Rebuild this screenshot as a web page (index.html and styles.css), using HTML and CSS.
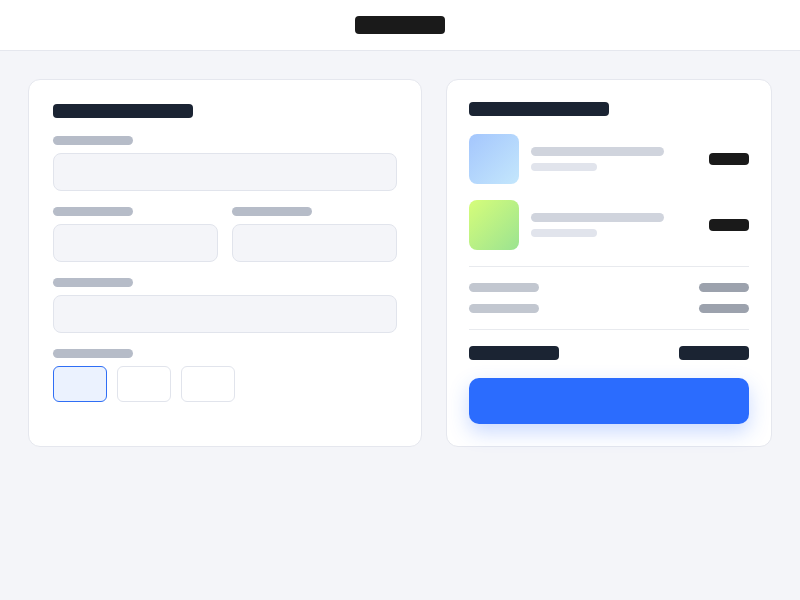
FILE: index.html
```html
<!DOCTYPE html>
<html lang="en">
<head>
  <meta charset="UTF-8" />
  <meta name="viewport" content="width=device-width, initial-scale=1.0"/>
  <title>Checkout</title>
  <link rel="stylesheet" href="styles.css">
</head>
<body>

<header class="topbar">
  <div class="logo"></div>
</header>

<main class="checkout">

  <!-- shipping form -->
  <section class="card form-card">
    <div class="card-title"></div>

    <div class="field">
      <div class="label"></div>
      <div class="input"></div>
    </div>

    <div class="field-row">
      <div class="field">
        <div class="label"></div>
        <div class="input"></div>
      </div>
      <div class="field">
        <div class="label"></div>
        <div class="input"></div>
      </div>
    </div>

    <div class="field">
      <div class="label"></div>
      <div class="input"></div>
    </div>

    <div class="field">
      <div class="label"></div>
      <div class="options">
        <div class="option selected"></div>
        <div class="option"></div>
        <div class="option"></div>
      </div>
    </div>
  </section>

  <!-- order summary -->
  <section class="card summary-card">
    <div class="card-title"></div>

    <div class="items">
      <div class="item">
        <div class="thumb blue"></div>
        <div class="item-text">
          <div class="line name"></div>
          <div class="line meta"></div>
        </div>
        <div class="price"></div>
      </div>
      <div class="item">
        <div class="thumb green"></div>
        <div class="item-text">
          <div class="line name"></div>
          <div class="line meta"></div>
        </div>
        <div class="price"></div>
      </div>
    </div>

    <div class="totals">
      <div class="sum-row">
        <div class="sum-key"></div>
        <div class="sum-val"></div>
      </div>
      <div class="sum-row">
        <div class="sum-key"></div>
        <div class="sum-val"></div>
      </div>
    </div>

    <div class="grand">
      <div class="grand-key"></div>
      <div class="grand-val"></div>
    </div>

    <button class="pay"></button>
  </section>

</main>

</body>
</html>
```

FILE: styles.css
```css
body {
  margin: 0;
  background: #f4f5f9;
  font-family: "Inter", "Liberation Sans", sans-serif;
}

.topbar {
  height: 50px;
  background: white;
  border-bottom: 1px solid #e5e7ee;
  display: flex;
  align-items: center;
  justify-content: center;
}

.logo {
  width: 90px;
  height: 18px;
  background: #1a1a1a;
  border-radius: 4px;
}

.checkout {
  display: grid;
  grid-template-columns: 394px 326px;
  gap: 24px;
  padding: 28px;
  align-items: stretch;
}

.card {
  background: white;
  border: 1px solid #e5e7ee;
  border-radius: 12px;
}

.card-title {
  width: 140px;
  height: 14px;
  background: #1b2433;
  border-radius: 4px;
}

/* form */
.form-card {
  padding: 24px;
  display: flex;
  flex-direction: column;
  gap: 16px;
}

.form-card .card-title {
  margin-bottom: 2px;
}

.field {
  display: flex;
  flex-direction: column;
  gap: 8px;
}

.field-row {
  display: grid;
  grid-template-columns: 1fr 1fr;
  gap: 14px;
}

.label {
  width: 80px;
  height: 9px;
  background: #b6bcc8;
  border-radius: 5px;
}

.input {
  height: 38px;
  box-sizing: border-box;
  background: #f4f5f9;
  border: 1px solid #e1e4ec;
  border-radius: 8px;
}

.options {
  display: flex;
  gap: 10px;
}

.option {
  width: 54px;
  height: 36px;
  box-sizing: border-box;
  background: white;
  border: 1px solid #e1e4ec;
  border-radius: 6px;
}

.option.selected {
  background: #ebf2fe;
  border-color: #2f6ef5;
}

/* summary */
.summary-card {
  padding: 22px;
  display: flex;
  flex-direction: column;
}

.items {
  margin-top: 18px;
  display: flex;
  flex-direction: column;
  gap: 16px;
  padding-bottom: 16px;
  border-bottom: 1px solid #e8eaee;
}

.item {
  display: flex;
  align-items: center;
  gap: 12px;
}

.thumb {
  width: 50px;
  height: 50px;
  border-radius: 8px;
}

.thumb.blue {
  background: linear-gradient(135deg, #a4c6fd, #c4e7fc);
}

.thumb.green {
  background: linear-gradient(135deg, #d6fd7a, #9be391);
}

.item-text {
  flex: 1;
  display: flex;
  flex-direction: column;
  gap: 7px;
}

.line {
  border-radius: 5px;
}

.line.name {
  width: 133px;
  height: 9px;
  background: #d0d4dd;
}

.line.meta {
  width: 66px;
  height: 8px;
  background: #e1e4ec;
}

.price {
  width: 40px;
  height: 12px;
  background: #1a1a1a;
  border-radius: 4px;
}

.totals {
  padding: 16px 0;
  display: flex;
  flex-direction: column;
  gap: 12px;
  border-bottom: 1px solid #e8eaee;
}

.sum-row, .grand {
  display: flex;
  justify-content: space-between;
}

.sum-key {
  width: 70px;
  height: 9px;
  background: #c2c7d0;
  border-radius: 5px;
}

.sum-val {
  width: 50px;
  height: 9px;
  background: #9ca2ad;
  border-radius: 5px;
}

.grand {
  margin-top: 16px;
}

.grand-key, .grand-val {
  height: 14px;
  background: #1b2433;
  border-radius: 4px;
}

.grand-key {
  width: 90px;
}

.grand-val {
  width: 70px;
}

.pay {
  margin-top: 18px;
  height: 46px;
  border: none;
  border-radius: 10px;
  background: #2b6cfe;
  box-shadow: 0 8px 20px rgba(43, 108, 254, 0.25);
}
```
